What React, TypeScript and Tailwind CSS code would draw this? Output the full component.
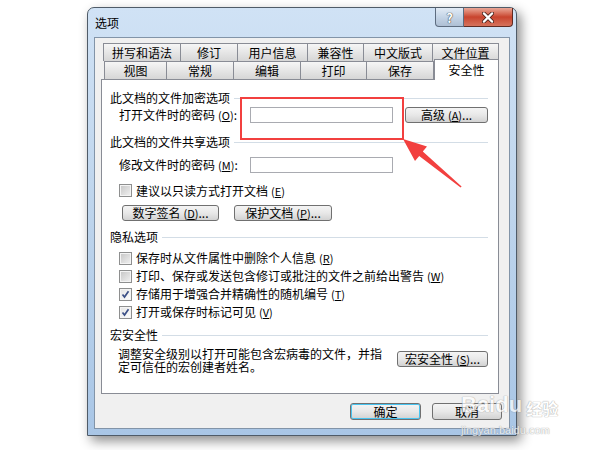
import type { ReactNode } from "react";

const row1 = [
  { label: "拼写和语法", w: "w-[78px]" },
  { label: "修订", w: "w-[57px]" },
  { label: "用户信息", w: "w-[70px]" },
  { label: "兼容性", w: "w-[56px]" },
  { label: "中文版式", w: "w-[69px]" },
  { label: "文件位置", w: "w-[66px]" },
];

const row2 = [
  { label: "视图", w: "w-[63px]" },
  { label: "常规", w: "w-[67px]" },
  { label: "编辑", w: "w-[67px]" },
  { label: "打印", w: "w-[66px]" },
  { label: "保存", w: "w-[67px]" },
];

function Tab({ label, w, first }: { label: string; w: string; first?: boolean }) {
  return (
    <div
      className={`flex h-[18px] items-center justify-center border-t border-r border-[#898c95] bg-linear-to-b from-[#f6f6f6] to-[#d6d6d6] ${w} ${
        first ? "border-l" : ""
      }`}
    >
      {label}
    </div>
  );
}

function Btn({ className, children }: { className: string; children: ReactNode }) {
  return (
    <div
      className={`flex items-center justify-center rounded-[3px] border border-[#707070] bg-linear-to-b from-[#f4f4f4] via-[#e8e8e8] to-[#d2d2d2] leading-none ${className}`}
    >
      {children}
    </div>
  );
}

function Key({ k }: { k: string }) {
  return (
    <span className="ml-[3px] text-[11px]">
      (<span className="underline">{k}</span>)
    </span>
  );
}

function Check({ checked }: { checked?: boolean }) {
  return (
    <div className="flex h-[13px] w-[13px] shrink-0 items-center justify-center border border-[#8e8f8f] bg-[#f4f4f4]">
      <div
        className={`relative h-[9px] w-[9px] ${
          checked ? "bg-linear-to-br from-[#e6e6e6] to-[#fbfbfb]" : "bg-linear-to-br from-[#c9c9c9] to-[#eeeeee]"
        }`}
      >
        {checked && (
          <svg viewBox="0 0 9 9" className="absolute inset-0 h-[9px] w-[9px]">
            <path d="M1.5 4.5 L3.5 7 L7.5 1.2" fill="none" stroke="#3b4f86" strokeWidth="1.7" />
          </svg>
        )}
      </div>
    </div>
  );
}

function Heading({ text, className }: { text: string; className: string }) {
  return (
    <div className={`flex h-[14px] items-center ${className}`}>
      <span>{text}</span>
      <div className="ml-[4px] h-px flex-1 bg-[#d3dde6]" />
    </div>
  );
}

function CheckRow({ checked, text, k }: { checked?: boolean; text: string; k: string }) {
  return (
    <div className="ml-[9px] flex h-[18px] items-center gap-[4px]">
      <Check checked={checked} />
      <span>
        {text}
        <Key k={k} />
      </span>
    </div>
  );
}

export default function App() {
  return (
    <div className="relative h-[450px] w-[599px] overflow-hidden bg-white pl-[87px] pt-[7px] font-['Noto_Sans_CJK_SC','Microsoft_YaHei',sans-serif] text-[12px] leading-[14px] text-black">
      {/* window */}
      <div className="flex h-[429px] w-[430px] flex-col rounded-t-[7px] border border-[#4f5b68] bg-linear-to-b from-[#d0e2f5] via-[#bdd4ec] to-[#a9c6e6] shadow-[4px_5px_12px_rgba(0,0,0,0.45)]">
        {/* title bar */}
        <div className="flex h-[29px] items-start pl-[7px]">
          <span className="self-center pt-[1px] text-[12px]">选项</span>
          <div className="ml-auto mr-[3px] flex">
            <div className="flex h-[19px] w-[29px] items-center justify-center rounded-bl-[4px] border border-t-0 border-[#5d6c7f] bg-linear-to-b from-[#e2ebf5] via-[#c4d4e6] to-[#aebfd4]">
              <span className="text-[13px] font-bold leading-none text-white [text-shadow:0_0_1px_#333,0_0_1px_#333]">?</span>
            </div>
            <div className="flex h-[19px] w-[49px] items-center justify-center rounded-br-[4px] border border-l-0 border-t-0 border-[#5e2a22] bg-linear-to-b from-[#e9a797] via-[#c8432d] to-[#d5725c]">
              <svg viewBox="0 0 14 12" className="h-[11px] w-[14px]">
                <path d="M2.5 1.5 L11.5 10.5 M11.5 1.5 L2.5 10.5" stroke="#3a1a14" strokeWidth="4" strokeLinecap="round" />
                <path d="M2.5 1.5 L11.5 10.5 M11.5 1.5 L2.5 10.5" stroke="#ffffff" strokeWidth="2.4" strokeLinecap="round" />
              </svg>
            </div>
          </div>
        </div>

        {/* client area */}
        <div className="mx-[6px] flex h-[392px] flex-col border border-[#8294a8] bg-[#f0f0f0] pl-[6px] pt-[5px]">
          <div className="w-[398px]">
            <div className="ml-[2px] flex h-[18px]">
              {row1.map((t, i) => (
                <Tab key={t.label} label={t.label} w={t.w} first={i === 0} />
              ))}
            </div>
            <div className="relative z-10 ml-[3px] flex h-[18px] items-start">
              {row2.map((t, i) => (
                <Tab key={t.label} label={t.label} w={t.w} first={i === 0} />
              ))}
              <div className="-mt-[2px] flex h-[21px] w-[65px] items-center justify-center border-t border-r border-l border-[#898c95] bg-white pb-[1px]">
                安全性
              </div>
            </div>

            {/* panel */}
            <div className="flex h-[315px] flex-col border border-[#898c95] bg-white pl-[8px] pr-[10px]">
              <Heading text="此文档的文件加密选项" className="mt-[11px]" />
              <div className="mt-[2px] flex h-[16px] items-center">
                <span className="ml-[9px] w-[131px]">
                  打开文件时的密码<Key k="O" />:
                </span>
                <div className="h-[16px] w-[143px] border border-[#a9abb1] bg-white" />
                <Btn className="ml-[12px] h-[16px] w-[83px]">
                  高级<Key k="A" />...
                </Btn>
              </div>

              <Heading text="此文档的文件共享选项" className="mt-[12px]" />
              <div className="mt-[8px] flex h-[16px] items-center">
                <span className="ml-[9px] w-[131px]">
                  修改文件时的密码<Key k="M" />:
                </span>
                <div className="h-[16px] w-[143px] border border-[#a9abb1] bg-white" />
              </div>

              <div className="mt-[11px] flex h-[13px] items-center gap-[4px] pl-[9px]">
                <Check />
                <span>
                  建议以只读方式打开文档<Key k="E" />
                </span>
              </div>

              <div className="ml-[12px] mt-[8px] flex gap-[15px]">
                <Btn className="h-[16px] w-[97px]">
                  数字签名<Key k="D" />...
                </Btn>
                <Btn className="h-[16px] w-[98px]">
                  保护文档<Key k="P" />...
                </Btn>
              </div>

              <Heading text="隐私选项" className="mt-[9px]" />
              <div className="mt-[5px] flex flex-col">
                <CheckRow text="保存时从文件属性中删除个人信息" k="R" />
                <CheckRow text="打印、保存或发送包含修订或批注的文件之前给出警告" k="W" />
                <CheckRow checked text="存储用于增强合并精确性的随机编号" k="T" />
                <CheckRow checked text="打开或保存时标记可见" k="V" />
              </div>

              <Heading text="宏安全性" className="mt-[7px]" />
              <div className="mt-[5px] flex items-start">
                <p className="ml-[8px] w-[266px] leading-[13px]">
                  调整安全级别以打开可能包含宏病毒的文件，并指
                  <br />
                  定可信任的宏创建者姓名。
                </p>
                <Btn className="ml-auto mt-[4px] h-[16px] w-[91px]">
                  宏安全性<Key k="S" />...
                </Btn>
              </div>
            </div>
          </div>

          <div className="mt-[9px] flex justify-end pr-[7px]">
            <Btn className="h-[17px] w-[71px] border-[#3c7fb1] shadow-[inset_0_0_0_1px_#48c4f0]">确定</Btn>
            <Btn className="ml-[11px] h-[17px] w-[70px]">取消</Btn>
          </div>
        </div>
      </div>

      {/* annotation: red frame and arrow */}
      <div className="absolute left-[240px] top-[97px] h-[43px] w-[164px] border-2 border-[#f2403f]" />
      <svg className="absolute left-0 top-0 h-[450px] w-[599px]" viewBox="0 0 599 450">
        <polygon
          points="403,139 427,146.5 422.8,151.6 461.6,186.4 460.6,187.6 419.2,156 415,161"
          fill="#f2403f"
        />
      </svg>

      {/* watermark */}
      <div className="absolute left-[461px] top-[394px] flex flex-col items-start opacity-70">
        <div className="flex items-end">
          <span className="font-['Liberation_Sans',sans-serif] text-[22px] font-bold leading-none text-white [text-shadow:0_0_1px_#8a8a8a,0_0_1px_#8a8a8a]">
            Baidu
          </span>
          <span className="ml-[4px] text-[16px] font-bold leading-none text-white [text-shadow:0_0_1px_#8a8a8a,0_0_1px_#8a8a8a]">
            经验
          </span>
        </div>
        <span className="mt-[9px] font-['Liberation_Sans',sans-serif] text-[11px] leading-none text-white [text-shadow:0_0_1px_#8a8a8a,0_0_1px_#8a8a8a]">
          jingyan.baidu.com
        </span>
      </div>
    </div>
  );
}
